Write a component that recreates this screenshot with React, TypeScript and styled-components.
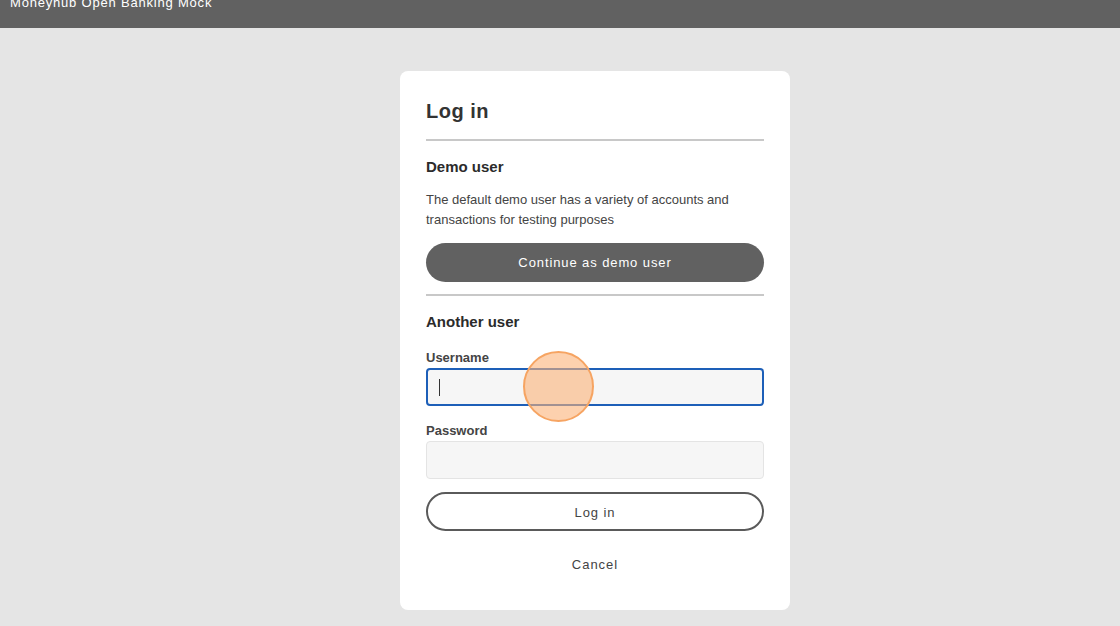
import styled, { createGlobalStyle } from 'styled-components';

const GlobalStyle = createGlobalStyle`
  * { box-sizing: border-box; }
  body {
    margin: 0;
    background: #e5e5e5;
    font-family: "Liberation Sans", Arial, sans-serif;
    color: #333;
  }
`;

export default function App() {
  return (
    <>
      <GlobalStyle />
      <Header>
        <Brand>Moneyhub Open Banking Mock</Brand>
      </Header>
      <Main>
        <Card>
          <Title>Log in</Title>
          <Divider />
          <SectionTitle>Demo user</SectionTitle>
          <Text>
            The default demo user has a variety of accounts and transactions for testing purposes
          </Text>
          <PrimaryButton type="button">Continue as demo user</PrimaryButton>
          <Divider $top={12} />
          <SectionTitle $bottom={18}>Another user</SectionTitle>
          <Field>
            <Label htmlFor="username">Username</Label>
            <InputWrap>
              <Input id="username" $focused />
              <Caret />
              <ClickMarker />
            </InputWrap>
          </Field>
          <Field>
            <Label htmlFor="password">Password</Label>
            <Input id="password" type="password" />
          </Field>
          <OutlineButton type="button">Log in</OutlineButton>
          <LinkButton type="button">Cancel</LinkButton>
        </Card>
      </Main>
    </>
  );
}

const Header = styled.header`
  display: flex;
  align-items: flex-start;
  height: 28px;
  padding: 0 10px;
  background: #616161;
  overflow: hidden;
`;

const Brand = styled.div`
  margin-top: -6px;
  color: #fff;
  font-size: 13px;
  line-height: 18px;
  letter-spacing: 0.8px;
`;

const Main = styled.main`
  display: flex;
  justify-content: center;
  padding: 43px 0 0 70px;
`;

const Card = styled.section`
  display: flex;
  flex-direction: column;
  width: 390px;
  padding: 24px 26px 35px;
  background: #fff;
  border-radius: 8px;
`;

const Title = styled.h1`
  margin: 0 0 12px;
  font-size: 20px;
  line-height: 32px;
  font-weight: 700;
  letter-spacing: 0.5px;
  color: #333;
`;

const Divider = styled.hr<{ $top?: number }>`
  width: 100%;
  margin: ${({ $top }) => $top ?? 0}px 0 0;
  border: 0;
  border-top: 2px solid #c8c8c8;
`;

const SectionTitle = styled.h2<{ $bottom?: number }>`
  margin: 16px 0 ${({ $bottom }) => $bottom ?? 13}px;
  font-size: 15px;
  line-height: 20px;
  font-weight: 700;
  color: #2b2b2b;
`;

const Text = styled.p`
  margin: 0 0 13px;
  font-size: 13px;
  line-height: 20px;
  color: #444;
`;

const PrimaryButton = styled.button`
  height: 39px;
  width: 100%;
  border: 0;
  border-radius: 20px;
  background: #616161;
  color: #fff;
  font-family: inherit;
  font-size: 13px;
  letter-spacing: 0.9px;
`;

const Field = styled.div`
  display: flex;
  flex-direction: column;
  margin-bottom: 17px;
`;

const Label = styled.label`
  margin-bottom: 2px;
  font-size: 13px;
  line-height: 16px;
  font-weight: 700;
  color: #444;
`;

const InputWrap = styled.div`
  position: relative;
`;

const Input = styled.input<{ $focused?: boolean }>`
  width: 100%;
  height: 38px;
  padding: 0 12px;
  background: #f6f6f6;
  border: ${({ $focused }) => ($focused ? '2px solid #1d5fb8' : '1px solid #e4e4e4')};
  border-radius: 4px;
  outline: none;
  font-family: inherit;
  font-size: 14px;
`;

const Caret = styled.span`
  position: absolute;
  left: 13px;
  top: 11px;
  width: 1px;
  height: 17px;
  background: #333;
`;

const ClickMarker = styled.span`
  position: absolute;
  left: 97px;
  top: -17px;
  width: 71px;
  height: 71px;
  border-radius: 50%;
  background: rgba(252, 178, 120, 0.6);
  border: 2px solid #f6a462;
  pointer-events: none;
`;

const OutlineButton = styled.button`
  height: 39px;
  width: 100%;
  margin-top: -4px;
  padding-top: 3px;
  border: 2px solid #5a5a5a;
  border-radius: 20px;
  background: #fff;
  color: #444;
  font-family: inherit;
  font-size: 13px;
  letter-spacing: 0.9px;
`;

const LinkButton = styled.button`
  align-self: center;
  margin-top: 24px;
  padding: 0;
  border: 0;
  background: none;
  color: #444;
  font-family: inherit;
  font-size: 13px;
  line-height: 20px;
  letter-spacing: 1px;
`;
